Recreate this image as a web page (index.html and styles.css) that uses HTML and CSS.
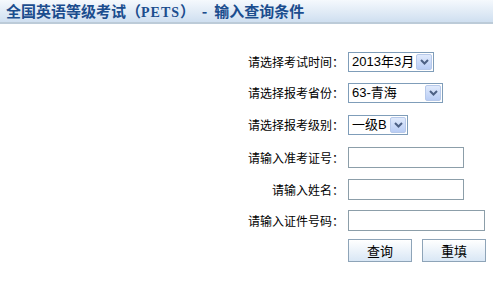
FILE: index.html
```html
<!DOCTYPE html>
<html lang="zh">
<head>
<meta charset="utf-8">
<title>PETS</title>
<link rel="stylesheet" href="styles.css">
</head>
<body>
<div class="header">全国英语等级考试（<span class="latin">PETS</span>）  -  输入查询条件</div>
<div class="form">
  <div class="label">请选择考试时间：</div>
  <div class="field"><div class="select w1"><span class="val">2013年3月</span><span class="btn"><svg width="9" height="6" viewBox="0 0 9 6"><path d="M1 1 L4.5 4.5 L8 1" fill="none" stroke="#4d6185" stroke-width="2"/></svg></span></div></div>
  <div class="label">请选择报考省份：</div>
  <div class="field"><div class="select w2"><span class="val">63-青海</span><span class="btn"><svg width="9" height="6" viewBox="0 0 9 6"><path d="M1 1 L4.5 4.5 L8 1" fill="none" stroke="#4d6185" stroke-width="2"/></svg></span></div></div>
  <div class="label">请选择报考级别：</div>
  <div class="field"><div class="select w3"><span class="val">一级B</span><span class="btn"><svg width="9" height="6" viewBox="0 0 9 6"><path d="M1 1 L4.5 4.5 L8 1" fill="none" stroke="#4d6185" stroke-width="2"/></svg></span></div></div>
  <div class="label">请输入准考证号：</div>
  <div class="field"><input class="text i1" type="text"></div>
  <div class="label">请输入姓名：</div>
  <div class="field"><input class="text i1" type="text"></div>
  <div class="label">请输入证件号码：</div>
  <div class="field"><input class="text i2" type="text"></div>
  <div class="label"></div>
  <div class="field buttons"><button class="b">查询</button><button class="b">重填</button></div>
</div>
</body>
</html>
```
FILE: styles.css
```css
html, body {
  margin: 0;
  padding: 0;
  background: #fff;
}
body {
  font-family: "Noto Sans CJK SC", "DejaVu Sans", sans-serif;
  font-size: 12px;
  color: #000;
}
.header {
  height: 22px;
  line-height: 22px;
  padding-left: 6px;
  background: linear-gradient(#f5f9fd, #cfdff0);
  border-bottom: 2px solid #bccbd8;
  color: #1b4d8e;
  font-weight: bold;
  font-size: 15px;
  white-space: pre;
}
.latin {
  font-family: "Liberation Serif", serif;
  font-size: 14px;
  letter-spacing: 1px;
}
.form {
  display: grid;
  grid-template-columns: 100px auto;
  grid-template-rows: 31px 31px 33px 32px 32px 30px 30px;
  column-gap: 4px;
  padding-top: 22px;
  padding-left: 244px;
}
.label {
  display: flex;
  align-items: center;
  justify-content: flex-end;
  white-space: nowrap;
}
.field {
  display: flex;
  align-items: center;
}
.select {
  box-sizing: border-box;
  height: 20px;
  border: 1px solid #7f9db9;
  display: flex;
  align-items: center;
  justify-content: space-between;
  padding: 0 1px 0 3px;
  font-family: "Liberation Sans", "Noto Sans CJK SC", sans-serif;
  font-size: 13px;
  background: #fff;
}
.w1 { width: 86px; }
.w2 { width: 95px; }
.w3 { width: 60px; }
.val { line-height: 18px; white-space: nowrap; }
.btn {
  box-sizing: border-box;
  width: 16px;
  height: 16px;
  border: 1px solid #b7c9ea;
  border-radius: 2px;
  background: linear-gradient(#e0eafc, #b9cdf5);
  display: flex;
  align-items: center;
  justify-content: center;
}
.text {
  box-sizing: border-box;
  height: 21px;
  border: 1px solid #8c9ea9;
  margin: 0;
  padding: 0;
  outline: none;
}
.i1 { width: 116px; }
.i2 { width: 137px; }
.buttons {
  gap: 10px;
}
.b {
  box-sizing: border-box;
  width: 64px;
  height: 23px;
  margin: 0;
  border: 1px solid #8ea4b8;
  background: linear-gradient(#ffffff, #d9e7f5);
  font-family: "Noto Sans CJK SC", sans-serif;
  font-size: 13px;
  color: #000;
  padding: 0;
}
```
